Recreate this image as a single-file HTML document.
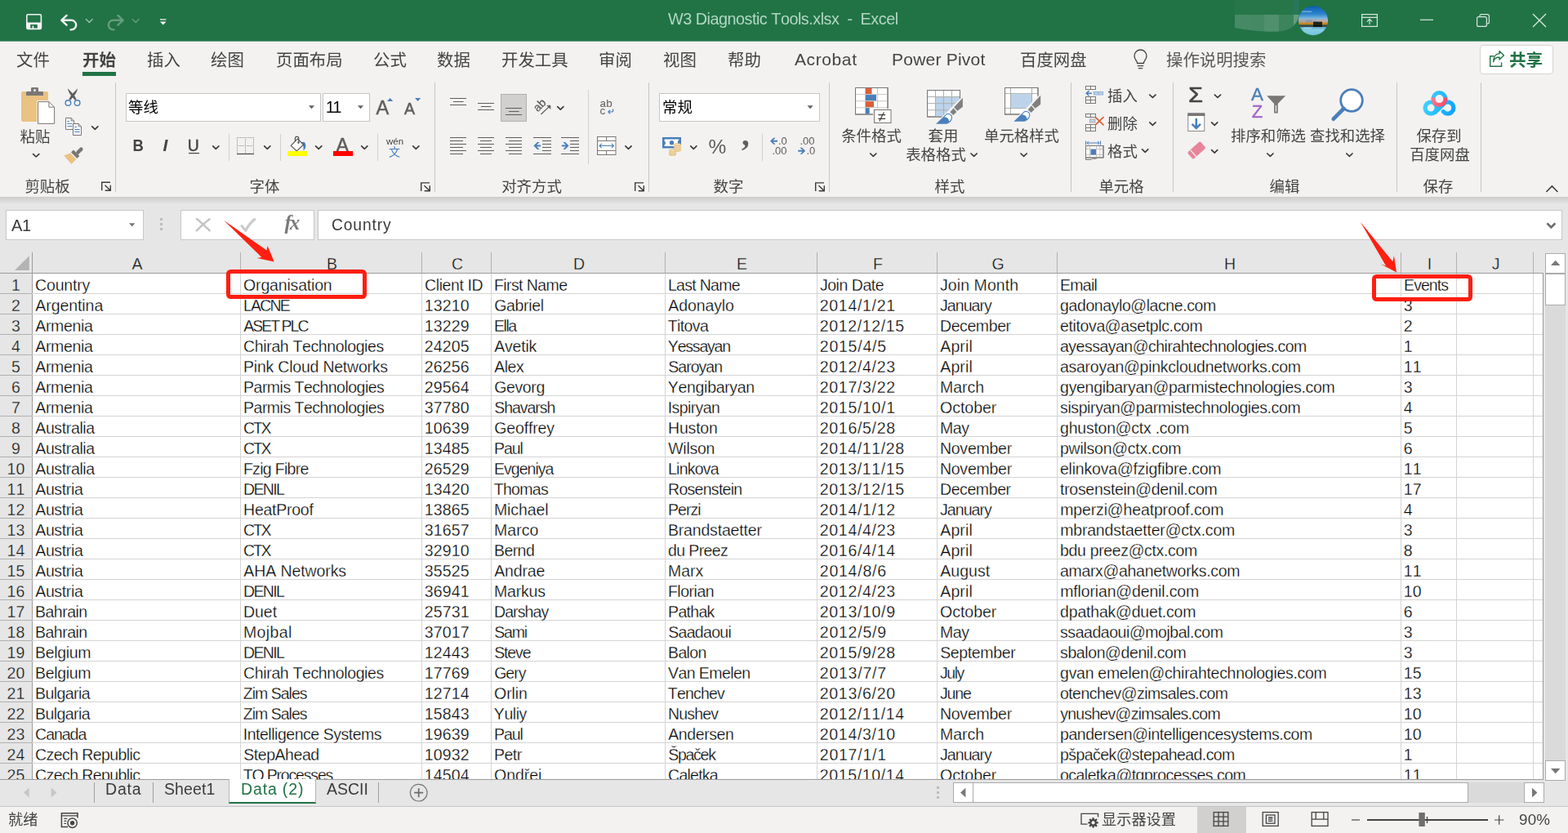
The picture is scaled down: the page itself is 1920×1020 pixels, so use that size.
<!DOCTYPE html><html lang="zh-CN"><head><meta charset="utf-8"><title>W3 Diagnostic Tools.xlsx - Excel</title><style>
*{box-sizing:border-box;margin:0;padding:0}
html,body{width:1920px;height:1020px;overflow:hidden;background:#e6e6e6}
body{font-family:"Liberation Sans","Noto Sans CJK SC",sans-serif;position:relative;color:#444}
.a{position:absolute}
.t{position:absolute;white-space:nowrap;line-height:1;will-change:transform}
#title{left:0;top:0;width:1920px;height:51px;background:#217346;border-bottom:1px solid #6fa387}
#tabs{left:0;top:51px;width:1920px;height:45px;background:#f3f2f1}
#ribbon{left:0;top:96px;width:1920px;height:145px;background:#f3f2f1}
#shade{left:0;top:241px;width:1920px;height:9px;background:linear-gradient(#cdcccb,#e6e6e6)}
.tab{font-size:20.4px;top:64.3px;color:#444}
.gl{font-size:18.4px;top:220px;color:#444}
.rt{font-size:18.4px;color:#444;margin-top:0.3px}
.sep{position:absolute;width:1px;background:#c8c6c4}
.box{position:absolute;background:#fff;border:1px solid #c6c6c6}
.cell{position:absolute;white-space:nowrap;font-size:19.5px;line-height:25px;height:25px;color:#000;font-kerning:none;-webkit-text-stroke:0.3px #fff}
.hl{position:absolute;height:1px;background:#d4d4d4}
.vl{position:absolute;width:1px;background:#d4d4d4}
.ch{position:absolute;top:310px;height:25px;margin-left:1px;font-size:19.5px;line-height:27px;text-align:center;color:#111;-webkit-text-stroke:0.3px #e6e6e6}
.rh{position:absolute;left:0;width:39px;height:25px;font-size:19.5px;line-height:25px;text-align:center;color:#111;font-kerning:none;-webkit-text-stroke:0.3px #e6e6e6}
svg{position:absolute;overflow:visible;will-change:transform}
</style></head><body>
<div id="title" class="a">
<div class="t" style="left:818.20px;top:14.24px;font-size:19.8px;letter-spacing:-0.48px;color:#b2d7c2;font-family:'Liberation Sans',sans-serif;font-kerning:none;white-space:pre;">W3 Diagnostic Tools.xlsx  -  Excel</div>
</div>
<div id="tabs" class="a"></div>
<div class="t tab" style="left:19.7px;">文件</div>
<div class="t tab" style="left:100.7px;font-weight:bold;">开始</div>
<div class="t tab" style="left:179.7px;">插入</div>
<div class="t tab" style="left:257.7px;">绘图</div>
<div class="t tab" style="left:337.7px;">页面布局</div>
<div class="t tab" style="left:456.7px;">公式</div>
<div class="t tab" style="left:534.7px;">数据</div>
<div class="t tab" style="left:613.7px;">开发工具</div>
<div class="t tab" style="left:732.7px;">审阅</div>
<div class="t tab" style="left:811.7px;">视图</div>
<div class="t tab" style="left:890.7px;">帮助</div>
<div class="t" style="left:972.50px;top:62.22px;font-size:21px;letter-spacing:0.6px;color:#444;font-family:'Liberation Sans',sans-serif;font-kerning:none;white-space:pre;">Acrobat</div>
<div class="t" style="left:1091.72px;top:62.22px;font-size:21px;letter-spacing:0.22px;color:#444;font-family:'Liberation Sans',sans-serif;font-kerning:none;white-space:pre;">Power Pivot</div>
<div class="t tab" style="left:1248.7px;">百度网盘</div>
<div class="t tab" style="left:1427.7px;color:#5a5856;">操作说明搜索</div>
<div class="a" style="left:101px;top:88px;width:41px;height:5px;background:#217346"></div>
<div class="a" style="left:1812px;top:55px;width:90px;height:36px;background:#fff;border:1px solid #d6d4d2;border-radius:4px"></div>
<div class="t" style="left:1847.700px;top:64.200px;font-size:20.600px;font-weight:bold;color:#217346">共享</div>
<div id="ribbon" class="a"></div><div id="shade" class="a"></div>
<div class="sep" style="left:141px;top:101px;height:134px"></div>
<div class="sep" style="left:532px;top:101px;height:134px"></div>
<div class="sep" style="left:794px;top:101px;height:134px"></div>
<div class="sep" style="left:1015px;top:101px;height:134px"></div>
<div class="sep" style="left:1311px;top:101px;height:134px"></div>
<div class="sep" style="left:1436px;top:101px;height:134px"></div>
<div class="sep" style="left:1710px;top:101px;height:134px"></div>
<div class="sep" style="left:1813px;top:101px;height:134px"></div>
<div class="sep" style="left:280px;top:164px;height:33px;background:#d2d0ce"></div>
<div class="sep" style="left:343px;top:164px;height:33px;background:#d2d0ce"></div>
<div class="sep" style="left:462px;top:164px;height:33px;background:#d2d0ce"></div>
<div class="sep" style="left:933px;top:164px;height:33px;background:#d2d0ce"></div>
<div class="sep" style="left:720px;top:110px;height:91px;background:#d2d0ce"></div>
<div class="t gl" style="left:-42px;width:200px;text-align:center">剪贴板</div>
<div class="t gl" style="left:224px;width:200px;text-align:center">字体</div>
<div class="t gl" style="left:551px;width:200px;text-align:center">对齐方式</div>
<div class="t gl" style="left:792px;width:200px;text-align:center">数字</div>
<div class="t gl" style="left:1063px;width:200px;text-align:center">样式</div>
<div class="t gl" style="left:1273px;width:200px;text-align:center">单元格</div>
<div class="t gl" style="left:1473px;width:200px;text-align:center">编辑</div>
<div class="t gl" style="left:1661px;width:200px;text-align:center">保存</div>
<div class="t rt" style="left:-57px;top:159px;width:200px;text-align:center">粘贴</div>
<div class="t rt" style="left:967px;top:158px;width:200px;text-align:center">条件格式</div>
<div class="t rt" style="left:1054.5px;top:158px;width:200px;text-align:center">套用</div>
<div class="t rt" style="left:1046px;top:181px;width:200px;text-align:center">表格格式</div>
<div class="t rt" style="left:1151px;top:158px;width:200px;text-align:center">单元格样式</div>
<div class="t rt" style="left:1453px;top:158px;width:200px;text-align:center">排序和筛选</div>
<div class="t rt" style="left:1550px;top:158px;width:200px;text-align:center">查找和选择</div>
<div class="t rt" style="left:1661.5px;top:158px;width:200px;text-align:center">保存到</div>
<div class="t rt" style="left:1662.5px;top:181px;width:200px;text-align:center">百度网盘</div>
<div class="t rt" style="left:1356px;top:108.3px">插入</div>
<div class="t rt" style="left:1356px;top:142.3px">删除</div>
<div class="t rt" style="left:1356px;top:176.3px">格式</div>
<div class="box" style="left:154px;top:114px;width:239px;height:35px"></div>
<div class="box" style="left:395px;top:114px;width:58px;height:35px"></div>
<div class="box" style="left:807px;top:114px;width:197px;height:35px"></div>
<div class="t" style="left:156.800px;top:122.600px;font-size:18.400px;color:#000">等线</div>
<div class="t" style="left:398.74px;top:122.09px;font-size:19.5px;letter-spacing:-2.33px;color:#000;font-family:'Liberation Sans',sans-serif;font-kerning:none;white-space:pre;">11</div>
<div class="t" style="left:810.800px;top:122.600px;font-size:18.400px;color:#000">常规</div>
<div class="a" style="left:613px;top:115px;width:32px;height:34px;background:#d2d0ce;border:1px solid #b3b0ad"></div>
<div class="box" style="left:7px;top:257px;width:169px;height:37px"></div>
<div class="box" style="left:221px;top:257px;width:164px;height:37px"></div>
<div class="box" style="left:389px;top:257px;width:1524px;height:37px"></div>
<div class="t" style="left:14.10px;top:265.87px;font-size:20px;letter-spacing:-0.44px;color:#3b3b3b;font-family:'Liberation Sans',sans-serif;font-kerning:none;white-space:pre;">A1</div>
<div class="t" style="left:405.64px;top:265.66px;font-size:19.3px;letter-spacing:0.86px;color:#3b3b3b;font-family:'Liberation Sans',sans-serif;font-kerning:none;white-space:pre;">Country</div>
<div class="a" style="left:0;top:309px;width:1890px;height:26px;background:#e6e6e6"></div>
<div class="a" style="left:0;top:335px;width:39px;height:620px;background:#e6e6e6"></div>
<div class="a" style="left:40px;top:335px;width:1849px;height:620px;background:#fff"></div>
<div class="a" style="left:0;top:334px;width:1890px;height:1px;background:#9b9b9b"></div>
<div class="a" style="left:39px;top:309px;width:1px;height:646px;background:#9b9b9b"></div>
<div class="a" style="left:1889px;top:334px;width:1px;height:621px;background:#9b9b9b"></div>
<div class="ch" style="left:40px;width:254px">A</div>
<div class="vl" style="left:294px;top:309px;height:25px;background:#b1b1b1"></div>
<div class="vl" style="left:294px;top:335px;height:620px"></div>
<div class="ch" style="left:295px;width:221px">B</div>
<div class="vl" style="left:516px;top:309px;height:25px;background:#b1b1b1"></div>
<div class="vl" style="left:516px;top:335px;height:620px"></div>
<div class="ch" style="left:517px;width:84px">C</div>
<div class="vl" style="left:601px;top:309px;height:25px;background:#b1b1b1"></div>
<div class="vl" style="left:601px;top:335px;height:620px"></div>
<div class="ch" style="left:602px;width:212px">D</div>
<div class="vl" style="left:814px;top:309px;height:25px;background:#b1b1b1"></div>
<div class="vl" style="left:814px;top:335px;height:620px"></div>
<div class="ch" style="left:815px;width:185px">E</div>
<div class="vl" style="left:1000px;top:309px;height:25px;background:#b1b1b1"></div>
<div class="vl" style="left:1000px;top:335px;height:620px"></div>
<div class="ch" style="left:1001px;width:146px">F</div>
<div class="vl" style="left:1147px;top:309px;height:25px;background:#b1b1b1"></div>
<div class="vl" style="left:1147px;top:335px;height:620px"></div>
<div class="ch" style="left:1148px;width:146px">G</div>
<div class="vl" style="left:1294px;top:309px;height:25px;background:#b1b1b1"></div>
<div class="vl" style="left:1294px;top:335px;height:620px"></div>
<div class="ch" style="left:1295px;width:420px">H</div>
<div class="vl" style="left:1715px;top:309px;height:25px;background:#b1b1b1"></div>
<div class="vl" style="left:1715px;top:335px;height:620px"></div>
<div class="ch" style="left:1716px;width:67px">I</div>
<div class="vl" style="left:1783px;top:309px;height:25px;background:#b1b1b1"></div>
<div class="vl" style="left:1783px;top:335px;height:620px"></div>
<div class="ch" style="left:1784px;width:93px">J</div>
<div class="vl" style="left:1877px;top:309px;height:25px;background:#b1b1b1"></div>
<div class="vl" style="left:1877px;top:335px;height:620px"></div>
<div class="a" style="left:0;top:335px;width:1890px;height:620px;overflow:hidden">
<div class="hl" style="left:0;top:24px;width:1889px"></div>
<div class="hl" style="left:0;top:24px;width:39px;background:#b1b1b1"></div>
<div class="rh" style="top:2px;letter-spacing:0.16px">1</div>
<div class="cell" style="left:43.11px;top:2px;letter-spacing:-0.19px">Country</div>
<div class="cell" style="left:298.12px;top:2px;letter-spacing:-0.18px">Organisation</div>
<div class="cell" style="left:520.11px;top:2px;letter-spacing:-0.42px">Client ID</div>
<div class="cell" style="left:604.90px;top:2px;letter-spacing:-0.58px">First Name</div>
<div class="cell" style="left:817.99px;top:2px;letter-spacing:-0.71px">Last Name</div>
<div class="cell" style="left:1003.97px;top:2px;letter-spacing:-0.47px">Join Date</div>
<div class="cell" style="left:1150.97px;top:2px;letter-spacing:0.08px">Join Month</div>
<div class="cell" style="left:1298.08px;top:2px;letter-spacing:-0.73px">Email</div>
<div class="cell" style="left:1719.08px;top:2px;letter-spacing:-0.94px">Events</div>
<div class="hl" style="left:0;top:49px;width:1889px"></div>
<div class="hl" style="left:0;top:49px;width:39px;background:#b1b1b1"></div>
<div class="rh" style="top:27px;letter-spacing:0.16px">2</div>
<div class="cell" style="left:43.26px;top:27px;letter-spacing:-0.06px">Argentina</div>
<div class="cell" style="left:297.99px;top:27px;letter-spacing:-1.79px">LACNE</div>
<div class="cell" style="left:519.80px;top:27px;letter-spacing:0.15px">13210</div>
<div class="cell" style="left:605.21px;top:27px;letter-spacing:-0.32px">Gabriel</div>
<div class="cell" style="left:818.26px;top:27px;letter-spacing:-0.1px">Adonaylo</div>
<div class="cell" style="left:1003.80px;top:27px;letter-spacing:0.69px">2014/1/21</div>
<div class="cell" style="left:1150.97px;top:27px;letter-spacing:-0.92px">January</div>
<div class="cell" style="left:1298.12px;top:27px;letter-spacing:-0.42px">gadonaylo@lacne.com</div>
<div class="cell" style="left:1718.80px;top:27px;letter-spacing:0.15px">3</div>
<div class="hl" style="left:0;top:74px;width:1889px"></div>
<div class="hl" style="left:0;top:74px;width:39px;background:#b1b1b1"></div>
<div class="rh" style="top:52px;letter-spacing:0.16px">3</div>
<div class="cell" style="left:43.26px;top:52px;letter-spacing:-0.32px">Armenia</div>
<div class="cell" style="left:298.26px;top:52px;letter-spacing:-2px">ASET PLC</div>
<div class="cell" style="left:519.80px;top:52px;letter-spacing:0.15px">13229</div>
<div class="cell" style="left:605.08px;top:52px;letter-spacing:-1.51px">Ella</div>
<div class="cell" style="left:817.78px;top:52px;letter-spacing:-0.62px">Titova</div>
<div class="cell" style="left:1003.80px;top:52px;letter-spacing:0.64px">2012/12/15</div>
<div class="cell" style="left:1150.99px;top:52px;letter-spacing:-0.41px">December</div>
<div class="cell" style="left:1297.94px;top:52px;letter-spacing:-0.36px">etitova@asetplc.com</div>
<div class="cell" style="left:1718.80px;top:52px;letter-spacing:0.15px">2</div>
<div class="hl" style="left:0;top:99px;width:1889px"></div>
<div class="hl" style="left:0;top:99px;width:39px;background:#b1b1b1"></div>
<div class="rh" style="top:77px;letter-spacing:0.16px">4</div>
<div class="cell" style="left:43.26px;top:77px;letter-spacing:-0.32px">Armenia</div>
<div class="cell" style="left:298.11px;top:77px;letter-spacing:-0.37px">Chirah Technologies</div>
<div class="cell" style="left:519.80px;top:77px;letter-spacing:0.15px">24205</div>
<div class="cell" style="left:605.26px;top:77px;letter-spacing:-0.22px">Avetik</div>
<div class="cell" style="left:817.86px;top:77px;letter-spacing:-1.2px">Yessayan</div>
<div class="cell" style="left:1003.80px;top:77px;letter-spacing:0.76px">2015/4/5</div>
<div class="cell" style="left:1151.26px;top:77px;letter-spacing:0.13px">April</div>
<div class="cell" style="left:1297.94px;top:77px;letter-spacing:-0.5px">ayessayan@chirahtechnologies.com</div>
<div class="cell" style="left:1718.80px;top:77px;letter-spacing:0.15px">1</div>
<div class="hl" style="left:0;top:124px;width:1889px"></div>
<div class="hl" style="left:0;top:124px;width:39px;background:#b1b1b1"></div>
<div class="rh" style="top:102px;letter-spacing:0.16px">5</div>
<div class="cell" style="left:43.26px;top:102px;letter-spacing:-0.32px">Armenia</div>
<div class="cell" style="left:298.08px;top:102px;letter-spacing:-0.22px">Pink Cloud Networks</div>
<div class="cell" style="left:519.80px;top:102px;letter-spacing:0.15px">26256</div>
<div class="cell" style="left:605.26px;top:102px;letter-spacing:-0.5px">Alex</div>
<div class="cell" style="left:818.21px;top:102px;letter-spacing:-0.96px">Saroyan</div>
<div class="cell" style="left:1003.80px;top:102px;letter-spacing:0.69px">2012/4/23</div>
<div class="cell" style="left:1151.26px;top:102px;letter-spacing:0.13px">April</div>
<div class="cell" style="left:1297.94px;top:102px;letter-spacing:-0.26px">asaroyan@pinkcloudnetworks.com</div>
<div class="cell" style="left:1718.80px;top:102px;letter-spacing:0.15px">11</div>
<div class="hl" style="left:0;top:149px;width:1889px"></div>
<div class="hl" style="left:0;top:149px;width:39px;background:#b1b1b1"></div>
<div class="rh" style="top:127px;letter-spacing:0.16px">6</div>
<div class="cell" style="left:43.26px;top:127px;letter-spacing:-0.32px">Armenia</div>
<div class="cell" style="left:298.08px;top:127px;letter-spacing:-0.52px">Parmis Technologies</div>
<div class="cell" style="left:519.80px;top:127px;letter-spacing:0.15px">29564</div>
<div class="cell" style="left:605.21px;top:127px;letter-spacing:-0.38px">Gevorg</div>
<div class="cell" style="left:817.86px;top:127px;letter-spacing:-0.32px">Yengibaryan</div>
<div class="cell" style="left:1003.80px;top:127px;letter-spacing:0.69px">2017/3/22</div>
<div class="cell" style="left:1150.99px;top:127px;letter-spacing:-0.02px">March</div>
<div class="cell" style="left:1298.12px;top:127px;letter-spacing:-0.31px">gyengibaryan@parmistechnologies.com</div>
<div class="cell" style="left:1718.80px;top:127px;letter-spacing:0.15px">3</div>
<div class="hl" style="left:0;top:174px;width:1889px"></div>
<div class="hl" style="left:0;top:174px;width:39px;background:#b1b1b1"></div>
<div class="rh" style="top:152px;letter-spacing:0.16px">7</div>
<div class="cell" style="left:43.26px;top:152px;letter-spacing:-0.32px">Armenia</div>
<div class="cell" style="left:298.08px;top:152px;letter-spacing:-0.52px">Parmis Technologies</div>
<div class="cell" style="left:519.80px;top:152px;letter-spacing:0.15px">37780</div>
<div class="cell" style="left:605.21px;top:152px;letter-spacing:-1.05px">Shavarsh</div>
<div class="cell" style="left:817.70px;top:152px;letter-spacing:-0.6px">Ispiryan</div>
<div class="cell" style="left:1003.80px;top:152px;letter-spacing:0.69px">2015/10/1</div>
<div class="cell" style="left:1151.12px;top:152px;letter-spacing:-0.04px">October</div>
<div class="cell" style="left:1298.04px;top:152px;letter-spacing:-0.4px">sispiryan@parmistechnologies.com</div>
<div class="cell" style="left:1718.80px;top:152px;letter-spacing:0.15px">4</div>
<div class="hl" style="left:0;top:199px;width:1889px"></div>
<div class="hl" style="left:0;top:199px;width:39px;background:#b1b1b1"></div>
<div class="rh" style="top:177px;letter-spacing:0.16px">8</div>
<div class="cell" style="left:43.26px;top:177px;letter-spacing:-0.37px">Australia</div>
<div class="cell" style="left:298.11px;top:177px;letter-spacing:-2.31px">CTX</div>
<div class="cell" style="left:519.80px;top:177px;letter-spacing:0.15px">10639</div>
<div class="cell" style="left:605.21px;top:177px;letter-spacing:-0.14px">Geoffrey</div>
<div class="cell" style="left:818.08px;top:177px;letter-spacing:-0.21px">Huston</div>
<div class="cell" style="left:1003.80px;top:177px;letter-spacing:0.69px">2016/5/28</div>
<div class="cell" style="left:1150.99px;top:177px;letter-spacing:-0.45px">May</div>
<div class="cell" style="left:1298.12px;top:177px;letter-spacing:-0.25px">ghuston@ctx .com</div>
<div class="cell" style="left:1718.80px;top:177px;letter-spacing:0.15px">5</div>
<div class="hl" style="left:0;top:224px;width:1889px"></div>
<div class="hl" style="left:0;top:224px;width:39px;background:#b1b1b1"></div>
<div class="rh" style="top:202px;letter-spacing:0.16px">9</div>
<div class="cell" style="left:43.26px;top:202px;letter-spacing:-0.37px">Australia</div>
<div class="cell" style="left:298.11px;top:202px;letter-spacing:-2.31px">CTX</div>
<div class="cell" style="left:519.80px;top:202px;letter-spacing:0.15px">13485</div>
<div class="cell" style="left:605.08px;top:202px;letter-spacing:-1.06px">Paul</div>
<div class="cell" style="left:818.16px;top:202px;letter-spacing:-0.24px">Wilson</div>
<div class="cell" style="left:1003.80px;top:202px;letter-spacing:0.64px">2014/11/28</div>
<div class="cell" style="left:1150.90px;top:202px;letter-spacing:-0.23px">November</div>
<div class="cell" style="left:1298.00px;top:202px;letter-spacing:-0.25px">pwilson@ctx.com</div>
<div class="cell" style="left:1718.80px;top:202px;letter-spacing:0.15px">6</div>
<div class="hl" style="left:0;top:249px;width:1889px"></div>
<div class="hl" style="left:0;top:249px;width:39px;background:#b1b1b1"></div>
<div class="rh" style="top:227px;letter-spacing:0.16px">10</div>
<div class="cell" style="left:43.26px;top:227px;letter-spacing:-0.37px">Australia</div>
<div class="cell" style="left:297.90px;top:227px;letter-spacing:-0.69px">Fzig Fibre</div>
<div class="cell" style="left:519.80px;top:227px;letter-spacing:0.15px">26529</div>
<div class="cell" style="left:605.08px;top:227px;letter-spacing:-0.99px">Evgeniya</div>
<div class="cell" style="left:817.99px;top:227px;letter-spacing:-0.75px">Linkova</div>
<div class="cell" style="left:1003.80px;top:227px;letter-spacing:0.64px">2013/11/15</div>
<div class="cell" style="left:1150.90px;top:227px;letter-spacing:-0.23px">November</div>
<div class="cell" style="left:1297.94px;top:227px;letter-spacing:-0.2px">elinkova@fzigfibre.com</div>
<div class="cell" style="left:1718.80px;top:227px;letter-spacing:0.15px">11</div>
<div class="hl" style="left:0;top:274px;width:1889px"></div>
<div class="hl" style="left:0;top:274px;width:39px;background:#b1b1b1"></div>
<div class="rh" style="top:252px;letter-spacing:0.16px">11</div>
<div class="cell" style="left:43.26px;top:252px;letter-spacing:-0.37px">Austria</div>
<div class="cell" style="left:297.99px;top:252px;letter-spacing:-1.64px">DENIL</div>
<div class="cell" style="left:519.80px;top:252px;letter-spacing:0.15px">13420</div>
<div class="cell" style="left:604.78px;top:252px;letter-spacing:-0.7px">Thomas</div>
<div class="cell" style="left:818.08px;top:252px;letter-spacing:-0.72px">Rosenstein</div>
<div class="cell" style="left:1003.80px;top:252px;letter-spacing:0.64px">2013/12/15</div>
<div class="cell" style="left:1150.99px;top:252px;letter-spacing:-0.41px">December</div>
<div class="cell" style="left:1298.06px;top:252px;letter-spacing:-0.3px">trosenstein@denil.com</div>
<div class="cell" style="left:1718.80px;top:252px;letter-spacing:0.15px">17</div>
<div class="hl" style="left:0;top:299px;width:1889px"></div>
<div class="hl" style="left:0;top:299px;width:39px;background:#b1b1b1"></div>
<div class="rh" style="top:277px;letter-spacing:0.16px">12</div>
<div class="cell" style="left:43.26px;top:277px;letter-spacing:-0.37px">Austria</div>
<div class="cell" style="left:298.08px;top:277px;letter-spacing:-0.26px">HeatProof</div>
<div class="cell" style="left:519.80px;top:277px;letter-spacing:0.15px">13865</div>
<div class="cell" style="left:604.99px;top:277px;letter-spacing:-0.11px">Michael</div>
<div class="cell" style="left:818.08px;top:277px;letter-spacing:-0.99px">Perzi</div>
<div class="cell" style="left:1003.80px;top:277px;letter-spacing:0.69px">2014/1/12</div>
<div class="cell" style="left:1150.97px;top:277px;letter-spacing:-0.92px">January</div>
<div class="cell" style="left:1298.19px;top:277px;letter-spacing:-0.14px">mperzi@heatproof.com</div>
<div class="cell" style="left:1718.80px;top:277px;letter-spacing:0.15px">4</div>
<div class="hl" style="left:0;top:324px;width:1889px"></div>
<div class="hl" style="left:0;top:324px;width:39px;background:#b1b1b1"></div>
<div class="rh" style="top:302px;letter-spacing:0.16px">13</div>
<div class="cell" style="left:43.26px;top:302px;letter-spacing:-0.37px">Austria</div>
<div class="cell" style="left:298.11px;top:302px;letter-spacing:-2.31px">CTX</div>
<div class="cell" style="left:519.80px;top:302px;letter-spacing:0.15px">31657</div>
<div class="cell" style="left:604.99px;top:302px;letter-spacing:0.07px">Marco</div>
<div class="cell" style="left:817.99px;top:302px;letter-spacing:-0.18px">Brandstaetter</div>
<div class="cell" style="left:1003.80px;top:302px;letter-spacing:0.69px">2014/4/23</div>
<div class="cell" style="left:1151.26px;top:302px;letter-spacing:0.13px">April</div>
<div class="cell" style="left:1298.19px;top:302px;letter-spacing:-0.19px">mbrandstaetter@ctx.com</div>
<div class="cell" style="left:1718.80px;top:302px;letter-spacing:0.15px">3</div>
<div class="hl" style="left:0;top:349px;width:1889px"></div>
<div class="hl" style="left:0;top:349px;width:39px;background:#b1b1b1"></div>
<div class="rh" style="top:327px;letter-spacing:0.16px">14</div>
<div class="cell" style="left:43.26px;top:327px;letter-spacing:-0.37px">Austria</div>
<div class="cell" style="left:298.11px;top:327px;letter-spacing:-2.31px">CTX</div>
<div class="cell" style="left:519.80px;top:327px;letter-spacing:0.15px">32910</div>
<div class="cell" style="left:604.99px;top:327px;letter-spacing:-0.57px">Bernd</div>
<div class="cell" style="left:818.12px;top:327px;letter-spacing:-0.62px">du Preez</div>
<div class="cell" style="left:1003.80px;top:327px;letter-spacing:0.69px">2016/4/14</div>
<div class="cell" style="left:1151.26px;top:327px;letter-spacing:0.13px">April</div>
<div class="cell" style="left:1298.10px;top:327px;letter-spacing:-0.35px">bdu preez@ctx.com</div>
<div class="cell" style="left:1718.80px;top:327px;letter-spacing:0.15px">8</div>
<div class="hl" style="left:0;top:374px;width:1889px"></div>
<div class="hl" style="left:0;top:374px;width:39px;background:#b1b1b1"></div>
<div class="rh" style="top:352px;letter-spacing:0.16px">15</div>
<div class="cell" style="left:43.26px;top:352px;letter-spacing:-0.37px">Austria</div>
<div class="cell" style="left:298.26px;top:352px;letter-spacing:-0.09px">AHA Networks</div>
<div class="cell" style="left:519.80px;top:352px;letter-spacing:0.15px">35525</div>
<div class="cell" style="left:605.26px;top:352px;letter-spacing:-0.17px">Andrae</div>
<div class="cell" style="left:817.99px;top:352px;letter-spacing:0.01px">Marx</div>
<div class="cell" style="left:1003.80px;top:352px;letter-spacing:0.76px">2014/8/6</div>
<div class="cell" style="left:1151.26px;top:352px;letter-spacing:0.05px">August</div>
<div class="cell" style="left:1297.94px;top:352px;letter-spacing:-0.31px">amarx@ahanetworks.com</div>
<div class="cell" style="left:1718.80px;top:352px;letter-spacing:0.15px">11</div>
<div class="hl" style="left:0;top:399px;width:1889px"></div>
<div class="hl" style="left:0;top:399px;width:39px;background:#b1b1b1"></div>
<div class="rh" style="top:377px;letter-spacing:0.16px">16</div>
<div class="cell" style="left:43.26px;top:377px;letter-spacing:-0.37px">Austria</div>
<div class="cell" style="left:297.99px;top:377px;letter-spacing:-1.64px">DENIL</div>
<div class="cell" style="left:519.80px;top:377px;letter-spacing:0.15px">36941</div>
<div class="cell" style="left:604.99px;top:377px;letter-spacing:-0.2px">Markus</div>
<div class="cell" style="left:817.90px;top:377px;letter-spacing:-0.47px">Florian</div>
<div class="cell" style="left:1003.80px;top:377px;letter-spacing:0.69px">2012/4/23</div>
<div class="cell" style="left:1151.26px;top:377px;letter-spacing:0.13px">April</div>
<div class="cell" style="left:1298.19px;top:377px;letter-spacing:-0.15px">mflorian@denil.com</div>
<div class="cell" style="left:1718.80px;top:377px;letter-spacing:0.15px">10</div>
<div class="hl" style="left:0;top:424px;width:1889px"></div>
<div class="hl" style="left:0;top:424px;width:39px;background:#b1b1b1"></div>
<div class="rh" style="top:402px;letter-spacing:0.16px">17</div>
<div class="cell" style="left:42.99px;top:402px;letter-spacing:-0.51px">Bahrain</div>
<div class="cell" style="left:297.99px;top:402px;letter-spacing:-0.02px">Duet</div>
<div class="cell" style="left:519.80px;top:402px;letter-spacing:0.15px">25731</div>
<div class="cell" style="left:604.99px;top:402px;letter-spacing:-0.91px">Darshay</div>
<div class="cell" style="left:818.08px;top:402px;letter-spacing:-0.69px">Pathak</div>
<div class="cell" style="left:1003.80px;top:402px;letter-spacing:0.69px">2013/10/9</div>
<div class="cell" style="left:1151.12px;top:402px;letter-spacing:-0.04px">October</div>
<div class="cell" style="left:1298.12px;top:402px;letter-spacing:-0.2px">dpathak@duet.com</div>
<div class="cell" style="left:1718.80px;top:402px;letter-spacing:0.15px">6</div>
<div class="hl" style="left:0;top:449px;width:1889px"></div>
<div class="hl" style="left:0;top:449px;width:39px;background:#b1b1b1"></div>
<div class="rh" style="top:427px;letter-spacing:0.16px">18</div>
<div class="cell" style="left:42.99px;top:427px;letter-spacing:-0.51px">Bahrain</div>
<div class="cell" style="left:297.99px;top:427px;letter-spacing:0.36px">Mojbal</div>
<div class="cell" style="left:519.80px;top:427px;letter-spacing:0.15px">37017</div>
<div class="cell" style="left:605.21px;top:427px;letter-spacing:-1.18px">Sami</div>
<div class="cell" style="left:818.21px;top:427px;letter-spacing:-0.68px">Saadaoui</div>
<div class="cell" style="left:1003.80px;top:427px;letter-spacing:0.76px">2012/5/9</div>
<div class="cell" style="left:1150.99px;top:427px;letter-spacing:-0.45px">May</div>
<div class="cell" style="left:1298.04px;top:427px;letter-spacing:-0.45px">ssaadaoui@mojbal.com</div>
<div class="cell" style="left:1718.80px;top:427px;letter-spacing:0.15px">3</div>
<div class="hl" style="left:0;top:474px;width:1889px"></div>
<div class="hl" style="left:0;top:474px;width:39px;background:#b1b1b1"></div>
<div class="rh" style="top:452px;letter-spacing:0.16px">19</div>
<div class="cell" style="left:42.99px;top:452px;letter-spacing:-0.32px">Belgium</div>
<div class="cell" style="left:297.99px;top:452px;letter-spacing:-1.64px">DENIL</div>
<div class="cell" style="left:519.80px;top:452px;letter-spacing:0.15px">12443</div>
<div class="cell" style="left:605.21px;top:452px;letter-spacing:-1.13px">Steve</div>
<div class="cell" style="left:817.99px;top:452px;letter-spacing:-0.61px">Balon</div>
<div class="cell" style="left:1003.80px;top:452px;letter-spacing:0.69px">2015/9/28</div>
<div class="cell" style="left:1151.21px;top:452px;letter-spacing:-0.37px">September</div>
<div class="cell" style="left:1298.04px;top:452px;letter-spacing:-0.4px">sbalon@denil.com</div>
<div class="cell" style="left:1718.80px;top:452px;letter-spacing:0.15px">3</div>
<div class="hl" style="left:0;top:499px;width:1889px"></div>
<div class="hl" style="left:0;top:499px;width:39px;background:#b1b1b1"></div>
<div class="rh" style="top:477px;letter-spacing:0.16px">20</div>
<div class="cell" style="left:42.99px;top:477px;letter-spacing:-0.32px">Belgium</div>
<div class="cell" style="left:298.11px;top:477px;letter-spacing:-0.37px">Chirah Technologies</div>
<div class="cell" style="left:519.80px;top:477px;letter-spacing:0.15px">17769</div>
<div class="cell" style="left:605.21px;top:477px;letter-spacing:-1px">Gery</div>
<div class="cell" style="left:818.07px;top:477px;letter-spacing:-0.58px">Van Emelen</div>
<div class="cell" style="left:1003.80px;top:477px;letter-spacing:0.76px">2013/7/7</div>
<div class="cell" style="left:1150.97px;top:477px;letter-spacing:-1.43px">July</div>
<div class="cell" style="left:1298.12px;top:477px;letter-spacing:-0.29px">gvan emelen@chirahtechnologies.com</div>
<div class="cell" style="left:1718.80px;top:477px;letter-spacing:0.15px">15</div>
<div class="hl" style="left:0;top:524px;width:1889px"></div>
<div class="hl" style="left:0;top:524px;width:39px;background:#b1b1b1"></div>
<div class="rh" style="top:502px;letter-spacing:0.16px">21</div>
<div class="cell" style="left:42.99px;top:502px;letter-spacing:-0.56px">Bulgaria</div>
<div class="cell" style="left:297.77px;top:502px;letter-spacing:-0.99px">Zim Sales</div>
<div class="cell" style="left:519.80px;top:502px;letter-spacing:0.15px">12714</div>
<div class="cell" style="left:605.12px;top:502px;letter-spacing:-0.14px">Orlin</div>
<div class="cell" style="left:817.78px;top:502px;letter-spacing:-0.79px">Tenchev</div>
<div class="cell" style="left:1003.80px;top:502px;letter-spacing:0.69px">2013/6/20</div>
<div class="cell" style="left:1150.97px;top:502px;letter-spacing:-1.12px">June</div>
<div class="cell" style="left:1297.94px;top:502px;letter-spacing:-0.55px">otenchev@zimsales.com</div>
<div class="cell" style="left:1718.80px;top:502px;letter-spacing:0.15px">13</div>
<div class="hl" style="left:0;top:549px;width:1889px"></div>
<div class="hl" style="left:0;top:549px;width:39px;background:#b1b1b1"></div>
<div class="rh" style="top:527px;letter-spacing:0.16px">22</div>
<div class="cell" style="left:42.99px;top:527px;letter-spacing:-0.56px">Bulgaria</div>
<div class="cell" style="left:297.77px;top:527px;letter-spacing:-0.99px">Zim Sales</div>
<div class="cell" style="left:519.80px;top:527px;letter-spacing:0.15px">15843</div>
<div class="cell" style="left:604.86px;top:527px;letter-spacing:-0.44px">Yuliy</div>
<div class="cell" style="left:817.90px;top:527px;letter-spacing:-0.79px">Nushev</div>
<div class="cell" style="left:1003.80px;top:527px;letter-spacing:0.64px">2012/11/14</div>
<div class="cell" style="left:1150.90px;top:527px;letter-spacing:-0.23px">November</div>
<div class="cell" style="left:1298.16px;top:527px;letter-spacing:-0.74px">ynushev@zimsales.com</div>
<div class="cell" style="left:1718.80px;top:527px;letter-spacing:0.15px">10</div>
<div class="hl" style="left:0;top:574px;width:1889px"></div>
<div class="hl" style="left:0;top:574px;width:39px;background:#b1b1b1"></div>
<div class="rh" style="top:552px;letter-spacing:0.16px">23</div>
<div class="cell" style="left:43.11px;top:552px;letter-spacing:-1.03px">Canada</div>
<div class="cell" style="left:297.70px;top:552px;letter-spacing:-0.47px">Intelligence Systems</div>
<div class="cell" style="left:519.80px;top:552px;letter-spacing:0.15px">19639</div>
<div class="cell" style="left:605.08px;top:552px;letter-spacing:-1.06px">Paul</div>
<div class="cell" style="left:818.26px;top:552px;letter-spacing:-0.41px">Andersen</div>
<div class="cell" style="left:1003.80px;top:552px;letter-spacing:0.69px">2014/3/10</div>
<div class="cell" style="left:1150.99px;top:552px;letter-spacing:-0.02px">March</div>
<div class="cell" style="left:1298.00px;top:552px;letter-spacing:-0.44px">pandersen@intelligencesystems.com</div>
<div class="cell" style="left:1718.80px;top:552px;letter-spacing:0.15px">10</div>
<div class="hl" style="left:0;top:599px;width:1889px"></div>
<div class="hl" style="left:0;top:599px;width:39px;background:#b1b1b1"></div>
<div class="rh" style="top:577px;letter-spacing:0.16px">24</div>
<div class="cell" style="left:43.11px;top:577px;letter-spacing:-0.59px">Czech Republic</div>
<div class="cell" style="left:298.21px;top:577px;letter-spacing:-0.44px">StepAhead</div>
<div class="cell" style="left:519.80px;top:577px;letter-spacing:0.15px">10932</div>
<div class="cell" style="left:605.08px;top:577px;letter-spacing:-0.55px">Petr</div>
<div class="cell" style="left:818.21px;top:577px;letter-spacing:-1.26px">Špaček</div>
<div class="cell" style="left:1003.80px;top:577px;letter-spacing:0.76px">2017/1/1</div>
<div class="cell" style="left:1150.97px;top:577px;letter-spacing:-0.92px">January</div>
<div class="cell" style="left:1298.00px;top:577px;letter-spacing:-0.57px">pšpaček@stepahead.com</div>
<div class="cell" style="left:1718.80px;top:577px;letter-spacing:0.15px">1</div>
<div class="hl" style="left:0;top:624px;width:1889px"></div>
<div class="hl" style="left:0;top:624px;width:39px;background:#b1b1b1"></div>
<div class="rh" style="top:602px;letter-spacing:0.16px">25</div>
<div class="cell" style="left:43.11px;top:602px;letter-spacing:-0.59px">Czech Republic</div>
<div class="cell" style="left:297.78px;top:602px;letter-spacing:-1.18px">TQ Processes</div>
<div class="cell" style="left:519.80px;top:602px;letter-spacing:0.15px">14504</div>
<div class="cell" style="left:605.12px;top:602px;letter-spacing:-0.06px">Ondřej</div>
<div class="cell" style="left:818.11px;top:602px;letter-spacing:-0.76px">Caletka</div>
<div class="cell" style="left:1003.80px;top:602px;letter-spacing:0.64px">2015/10/14</div>
<div class="cell" style="left:1151.12px;top:602px;letter-spacing:-0.04px">October</div>
<div class="cell" style="left:1297.94px;top:602px;letter-spacing:-0.52px">ocaletka@tqprocesses.com</div>
<div class="cell" style="left:1718.80px;top:602px;letter-spacing:0.15px">11</div>
</div>
<div class="a" style="left:0;top:955px;width:1920px;height:33px;background:#e6e6e6;border-bottom:1px solid #c6c6c6"></div>
<div class="a" style="left:0;top:954px;width:1890px;height:1px;background:#9b9b9b"></div>
<div class="a" style="left:280px;top:954px;width:107px;height:30px;background:#fff;border-left:1px solid #b5b5b5;border-right:1px solid #b5b5b5;border-bottom:2px solid #217346"></div>
<div class="t" style="left:128.64px;top:957.29px;font-size:19.5px;letter-spacing:0.8px;color:#3b3b3b;font-family:'Liberation Sans',sans-serif;font-kerning:none;white-space:pre;">Data</div>
<div class="t" style="left:201.02px;top:957.29px;font-size:19.5px;letter-spacing:0.11px;color:#3b3b3b;font-family:'Liberation Sans',sans-serif;font-kerning:none;white-space:pre;">Sheet1</div>
<div class="t" style="left:294.84px;top:957.29px;font-size:19.5px;letter-spacing:0.85px;color:#217346;font-family:'Liberation Sans',sans-serif;font-kerning:none;white-space:pre;">Data (2)</div>
<div class="t" style="left:399.70px;top:957.29px;font-size:19.5px;letter-spacing:-0.03px;color:#3b3b3b;font-family:'Liberation Sans',sans-serif;font-kerning:none;white-space:pre;">ASCII</div>
<div class="a" style="left:1167px;top:958px;width:724px;height:25px;background:#dadada"></div>
<div class="box" style="left:1167px;top:958px;width:25px;height:25px;border-color:#ababab"></div>
<div class="box" style="left:1191px;top:958px;width:607px;height:25px;border-color:#ababab"></div>
<div class="box" style="left:1866px;top:958px;width:25px;height:25px;border-color:#ababab"></div>
<div class="a" style="left:1892px;top:335px;width:25px;height:597px;background:#dadada"></div>
<div class="box" style="left:1892px;top:310px;width:25px;height:25px;border-color:#ababab"></div>
<div class="box" style="left:1892px;top:335px;width:25px;height:39px;border-color:#ababab"></div>
<div class="box" style="left:1892px;top:931px;width:25px;height:25px;border-color:#ababab"></div>
<div class="a" style="left:0;top:988px;width:1920px;height:32px;background:#f3f2f1"></div>
<div class="a" style="left:1466px;top:988px;width:60px;height:32px;background:#d2d0ce"></div>
<div class="t" style="left:9.600px;top:995.400px;font-size:18.200px;color:#444">就绪</div>
<div class="t" style="left:1348.600px;top:994.500px;font-size:18.200px;color:#444">显示器设置</div>
<div class="t" style="left:1859.65px;top:994.59px;font-size:18.8px;letter-spacing:0.18px;color:#444;font-family:'Liberation Sans',sans-serif;font-kerning:none;white-space:pre;">90%</div>
<svg width="1920" height="1020" style="left:0;top:0">
<g fill="none" stroke="#f3f3f3" stroke-width="1.6"><rect x="32.8" y="17.8" width="17.6" height="17.6" rx="1.5"/></g>
<path d="M33 27.5 h17.2 v7.6 h-4.4 v-5 h-8.6 v5 h-4.2 z M39.6 31.5 h1.6 v3.6 h-1.6z" fill="#f3f3f3"/>
<path d="M81.6 18.9 L75.3 24.800 L81.6 30.7 M76 24.800 H87.4 A5.800 5.800 0 0 1 87.4 36.400 H86.6" fill="none" stroke="#f3f3f3" stroke-width="2.400" stroke-linecap="round" stroke-linejoin="round"/>
<path d="M105.4 23.6 l3.9 3.8 l3.9 -3.8" fill="none" stroke="#fff" stroke-width="1.4" stroke-linecap="round" stroke-linejoin="round" opacity="0.55"/>
<path d="M144.400 18.900 L150.700 24.800 L144.400 30.700 M150 24.800 H138.600 A5.800 5.800 0 0 0 138.600 36.400 H139.400" fill="none" stroke="#fff" stroke-width="2.400" stroke-linecap="round" stroke-linejoin="round" opacity="0.3"/>
<path d="M162.3 23.6 l3.9 3.8 l3.9 -3.8" fill="none" stroke="#fff" stroke-width="1.4" stroke-linecap="round" stroke-linejoin="round" opacity="0.3"/>
<path d="M196 23.2 h7.4 v1.3 h-7.4z M195.8 26.4 h7.8 l-3.9 4z" fill="#f3f3f3"/>
<defs><clipPath id="ub"><path d="M1512 0 H1591 V14 C1591 26 1584 38.6 1562 38.800 C1548 39 1536 38.600 1512 34 z"/></clipPath></defs>
<g clip-path="url(#ub)"><rect x="1512" y="0" width="80" height="18" fill="#fff" opacity="0.025"/><rect x="1584" y="0" width="8" height="18" fill="#2a7a7a" opacity="0.35"/><rect x="1512" y="18" width="18" height="22" fill="#fff" opacity="0.170"/><rect x="1530" y="18" width="18" height="22" fill="#fff" opacity="0.160"/><rect x="1548" y="18" width="18" height="22" fill="#fff" opacity="0.210"/><rect x="1566" y="18" width="18" height="22" fill="#fff" opacity="0.120"/><rect x="1584" y="18" width="8" height="22" fill="#fff" opacity="0.300"/></g>
<defs><clipPath id="av"><circle cx="1608" cy="25.2" r="18"/></clipPath><linearGradient id="sky" x1="0" y1="0" x2="0" y2="1"><stop offset="0" stop-color="#0657a6"/><stop offset="0.600" stop-color="#2f86cd"/><stop offset="1" stop-color="#9fcbe8"/></linearGradient><linearGradient id="wat" x1="0" y1="0" x2="0" y2="1"><stop offset="0" stop-color="#5fa9c8"/><stop offset="0.300" stop-color="#86cfe3"/><stop offset="1" stop-color="#6fc0da"/></linearGradient></defs>
<g clip-path="url(#av)"><rect x="1589" y="6" width="38" height="19" fill="url(#sky)"/><rect x="1594" y="13.600" width="12" height="1.200" fill="#9cc6ea" opacity="0.800"/><rect x="1589" y="23.600" width="38" height="4.400" fill="#a9a5a8"/><rect x="1599" y="24.400" width="8" height="3" fill="#8e97a5"/><rect x="1613" y="24" width="14" height="3.400" fill="#bcaaa8"/><rect x="1589" y="27.600" width="38" height="3" fill="#c9861f"/><rect x="1608" y="26.600" width="11" height="6.600" fill="#1b2414"/><rect x="1589" y="30.400" width="38" height="2.800" fill="#3d4b4a"/><rect x="1608" y="30.400" width="11" height="3.400" fill="#11170e"/><rect x="1589" y="33" width="38" height="12" fill="url(#wat)"/><rect x="1596" y="33.800" width="10" height="1.400" fill="#b5e0ee" opacity="0.800"/></g>
<g fill="none" stroke="#d9e8df" stroke-width="1.2"><rect x="1667.6" y="17.6" width="18.8" height="14.8"/><path d="M1667.6 21.4 h18.8 M1677 30 v-6.2 M1673.8 26.6 l3.2 -3.2 l3.2 3.2"/></g>
<path d="M1739 24.3 h16" stroke="#d9e8df" stroke-width="1.2"/>
<g fill="none" stroke="#d9e8df" stroke-width="1.2"><rect x="1808.6" y="20.6" width="11.8" height="11.8" rx="2"/><path d="M1812 20.4 V19.6 a2 2 0 0 1 2 -2 H1821.4 a2 2 0 0 1 2 2 V27 a2 2 0 0 1 -2 2 H1820.6"/></g>
<path d="M1877 17 l16 16 M1893 17 l-16 16" stroke="#d9e8df" stroke-width="1.3"/>
<g fill="none" stroke="#444" stroke-width="1.3"><path d="M1392.6 77.5 c0 -3 -3.6 -4.6 -3.6 -9 a7.5 7.5 0 0 1 15 0 c0 4.4 -3.6 6 -3.6 9 z"/><path d="M1392.8 80.6 h7.4 M1393.8 83.6 h5.4"/></g>
<g fill="none" stroke="#217346" stroke-width="1.4" stroke-linejoin="round"><path d="M1829.5 68.8 H1824.7 V81.3 H1838.6 V76.6"/><path d="M1836 62.6 L1841.4 67.8 L1836 73 V70 C1832 70 1829.6 71.6 1828.6 75.6 C1828.6 69.6 1831.6 65.8 1836 65.6 z"/></g>
<rect x="26" y="112" width="33" height="37" rx="2.2" fill="#eac282"/>
<path d="M38 112 v-3.6 a1.4 1.4 0 0 1 1.4 -1.4 h6.2 a1.4 1.4 0 0 1 1.4 1.4 v3.6 h4.6 a1.4 1.4 0 0 1 1.4 1.4 v3.6 h-21 v-3.6 a1.4 1.4 0 0 1 1.4 -1.4 z" fill="#797775"/>
<circle cx="42.5" cy="110.4" r="1.5" fill="#f3f2f1"/>
<path d="M45 123 h15.6 l7.6 7.4 v22.4 h-23.2z" fill="#f3f2f1"/>
<path d="M46.5 124.6 h13.4 l6.7 6.6 v20.2 h-20.1z" fill="#fff" stroke="#797775" stroke-width="1"/>
<path d="M59.9 124.6 v6.6 h6.7" fill="none" stroke="#797775" stroke-width="1"/>
<path d="M40.6 188.6 l3.6 3.4 l3.6 -3.4" fill="none" stroke="#3b3a39" stroke-width="1.7" stroke-linecap="round" stroke-linejoin="round" opacity="1"/>
<path d="M83 108.200 L90.800 116.600 L93.600 121.400 L91.800 122.800 L87.400 117.400 C85 114.600 83.400 111.600 83 108.200z" fill="#605e5c"/>
<path d="M95 108.200 L87.200 116.600 L84.400 121.400 L86.200 122.800 L90.600 117.400 C93 114.600 94.600 111.600 95 108.200z" fill="#605e5c"/>
<circle cx="83.400" cy="126" r="3.300" fill="none" stroke="#4a7ebb" stroke-width="1.400"/><circle cx="94.600" cy="126" r="3.300" fill="none" stroke="#4a7ebb" stroke-width="1.400"/>
<path d="M80.5 144.5 h6.6 l3.4 3.4 v10.6 h-10 z" fill="#fff" stroke="#797775" stroke-width="1"/><path d="M87.1 144.5 v3.4 h3.4" fill="none" stroke="#797775" stroke-width="1"/>
<path d="M82.4 148.5 h2.6 M82.4 151.5 h6 M82.4 154.5 h6" stroke="#4a7ebb" stroke-width="1"/>
<path d="M89.5 151.5 h6.6 l3.4 3.4 v10.6 h-10 z" fill="#fff" stroke="#797775" stroke-width="1"/><path d="M96.1 151.5 v3.4 h3.4" fill="none" stroke="#797775" stroke-width="1"/>
<path d="M91.4 155.5 h2.6 M91.4 158.5 h6.2 M91.4 161.5 h6.2" stroke="#4a7ebb" stroke-width="1"/>
<path d="M112.7 154.9 l3.6 3.4 l3.6 -3.4" fill="none" stroke="#3b3a39" stroke-width="1.7" stroke-linecap="round" stroke-linejoin="round" opacity="1"/>
<path d="M78.3 190.4 L86 187.6 L93.4 195 L87.4 201 z" fill="#eac282"/>
<path d="M87 186.6 L90 183.6 L97.4 191 L94.4 194 z" fill="#797775"/>
<path d="M95.4 186.6 L99.4 182.6" stroke="#797775" stroke-width="4.4" stroke-linecap="round"/>
<path d="M124.7 232.6 V223.3 H134.3 M129 227.2 L135 233 M129.4 233.2 H135.3 V227.4" fill="none" stroke="#3b3a39" stroke-width="1.4" stroke-linecap="square"/>
<path d="M378 129.3 h7 l-3.5 4 z" fill="#605e5c"/>
<path d="M438 129.3 h7 l-3.5 4 z" fill="#605e5c"/>
<text x="460.4" y="140" font-size="23.6" fill="#605e5c" stroke="#605e5c" stroke-width="0.500" font-family="Liberation Sans, sans-serif">A</text>
<path d="M474 124 l3.6 -4 l3.6 4z" fill="#4a7ebb"/>
<text x="495" y="140" font-size="19.6" fill="#605e5c" stroke="#605e5c" stroke-width="0.500" font-family="Liberation Sans, sans-serif">A</text>
<path d="M508 120 h7.2 l-3.6 4z" fill="#4a7ebb"/>
<text transform="translate(162.400 185.400) scale(0.880 1)" font-size="21" font-weight="bold" fill="#444" font-family="Liberation Sans, sans-serif">B</text>
<text x="199.600" y="185.400" font-size="21" font-weight="bold" font-style="italic" fill="#444" font-family="Liberation Sans, sans-serif">I</text>
<text transform="translate(229.800 185.400) scale(0.920 1)" font-size="21" fill="#444" stroke="#444" stroke-width="0.500" font-family="Liberation Sans, sans-serif">U</text>
<path d="M231 187.6 h13" stroke="#444" stroke-width="1.2"/>
<path d="M260.7 178.9 l3.6 3.4 l3.6 -3.4" fill="none" stroke="#3b3a39" stroke-width="1.7" stroke-linecap="round" stroke-linejoin="round" opacity="1"/>
<g fill="none" stroke="#8a8886" stroke-width="1" stroke-dasharray="1 1"><path d="M290 168.5 h21 M290.5 168 v20 M310.500 168 v20 M300.500 168 v20 M290 178.500 h21"/></g>
<path d="M290 188.500 h21" stroke="#444" stroke-width="1.2"/>
<path d="M323.7 178.9 l3.6 3.4 l3.6 -3.4" fill="none" stroke="#3b3a39" stroke-width="1.7" stroke-linecap="round" stroke-linejoin="round" opacity="1"/>
<path d="M372.200 173.800 c2 1.400 2.600 3.600 2 6.400 c-0.400 1.800 -1.600 3.200 -2.800 4.600 c0.400 -2.600 0.400 -4.400 -0.200 -6.400 c-0.400 -1.600 -1.400 -2.800 -2.800 -3.800z" fill="#4a7ebb"/>
<path d="M364.500 169.900 L371.500 177.200 L363.300 184.900 L356.200 178.300 z" fill="#fff" stroke="#4d4c4b" stroke-width="1.100" stroke-linejoin="round"/>
<path d="M361.400 173 v-3.600 a2 2 0 0 1 2 -2 h0.400 a2 2 0 0 1 2 2 v4.400" fill="none" stroke="#4d4c4b" stroke-width="1.100"/>
<circle cx="365.500" cy="174.600" r="1.300" fill="#605e5c"/>
<rect x="352" y="185" width="24.200" height="6" fill="#ffff00"/>
<path d="M386.6 178.9 l3.6 3.4 l3.6 -3.4" fill="none" stroke="#3b3a39" stroke-width="1.7" stroke-linecap="round" stroke-linejoin="round" opacity="1"/>
<text x="411.400" y="185.600" font-size="23.400" fill="#605e5c" stroke="#605e5c" stroke-width="0.600" font-family="Liberation Sans, sans-serif">A</text>
<rect x="408" y="185" width="24.200" height="6" fill="#ff0000"/>
<path d="M442.7 178.9 l3.6 3.4 l3.6 -3.4" fill="none" stroke="#3b3a39" stroke-width="1.7" stroke-linecap="round" stroke-linejoin="round" opacity="1"/>
<text x="473" y="176.6" font-size="11.5" fill="#444" font-family="Liberation Sans, sans-serif">wén</text>
<text x="476" y="190.6" font-size="14" fill="#4a7ebb" font-family="Liberation Sans, Noto Sans CJK SC, sans-serif">文</text>
<path d="M505.7 178.9 l3.6 3.4 l3.6 -3.4" fill="none" stroke="#3b3a39" stroke-width="1.7" stroke-linecap="round" stroke-linejoin="round" opacity="1"/>
<path d="M515.7 233.2 V223.9 H525.3 M520 227.8 L526 233.6 M520.4 233.8 H526.3 V228" fill="none" stroke="#3b3a39" stroke-width="1.4" stroke-linecap="square"/>
<path d="M551 120.5 H571 M555 124.5 H567.5 M551 128.5 H571 " stroke="#605e5c" stroke-width="1.1" fill="none"/>
<path d="M585 126.5 H605 M589 130.5 H601.5 M585 134.5 H605 " stroke="#605e5c" stroke-width="1.1" fill="none"/>
<path d="M619 132.5 H639 M623 136.5 H635.5 M619 140.5 H639 " stroke="#605e5c" stroke-width="1.1" fill="none"/>
<path d="M551 168.5 H571 M551 172.5 H567 M551 176.5 H571 M551 180.5 H567 M551 184.5 H571 M551 188.5 H567 " stroke="#605e5c" stroke-width="1.1" fill="none"/>
<path d="M585 168.5 H605 M588 172.5 H602 M585 176.5 H605 M588 180.5 H602 M585 184.5 H605 M588 188.5 H602 " stroke="#605e5c" stroke-width="1.1" fill="none"/>
<path d="M619 168.5 H639 M623 172.5 H639 M619 176.5 H639 M623 180.5 H639 M619 184.5 H639 M623 188.5 H639 " stroke="#605e5c" stroke-width="1.1" fill="none"/>
<path d="M653 168.5 H675 M664 172.5 H675 M664 176.5 H675 M664 180.5 H675 M664 184.5 H675 M653 188.5 H675 " stroke="#605e5c" stroke-width="1.1" fill="none"/>
<path d="M687 168.5 H709 M698 172.5 H709 M698 176.5 H709 M698 180.5 H709 M698 184.5 H709 M687 188.5 H709 " stroke="#605e5c" stroke-width="1.1" fill="none"/>
<path d="M653.4 178.5 L658 174 h2.6 l-3.400 3.400 h5 v2.200 h-5 l3.400 3.400 h-2.600 z" fill="#4a7ebb"/>
<path d="M696.6 178.5 L692 174 h-2.600 l3.400 3.400 h-5 v2.200 h5 l-3.400 3.400 h2.600 z" fill="#4a7ebb"/>
<text transform="translate(658.6 137.6) rotate(-45)" font-size="14" fill="#605e5c" stroke="#605e5c" stroke-width="0.300" font-family="Liberation Sans, sans-serif">ab</text>
<path d="M662.4 140 L673.2 129.900" fill="none" stroke="#605e5c" stroke-width="1.300"/>
<path d="M669.8 129.200 H674 V133.400 z" fill="#605e5c" stroke="#605e5c" stroke-width="0.600"/>
<path d="M682.7 130.7 l3.6 3.4 l3.6 -3.4" fill="none" stroke="#3b3a39" stroke-width="1.7" stroke-linecap="round" stroke-linejoin="round" opacity="1"/>
<text x="734.4" y="131" font-size="13.5" fill="#605e5c" font-family="Liberation Sans, sans-serif" letter-spacing="0.3">ab</text>
<text x="734.4" y="140.4" font-size="13.5" fill="#605e5c" font-family="Liberation Sans, sans-serif">c</text>
<path d="M750.6 133.600 v2.400 a1 1 0 0 1 -1 1 h-4.600 M747.200 134.600 l-2.400 2.400 l2.400 2.400" fill="none" stroke="#4a7ebb" stroke-width="1.2"/>
<rect x="731.5" y="167.5" width="22.500" height="22" fill="#fff" stroke="#797775" stroke-width="1"/>
<path d="M731.500 172.500 h22.500 M731.500 184.500 h22.500 M742.500 167.500 v5 M742.500 184.500 v5" stroke="#797775" stroke-width="1" fill="none"/>
<path d="M734 178.500 h17.500 M736.600 176 l-2.600 2.500 l2.600 2.500 M748.900 176 l2.600 2.500 l-2.600 2.500" stroke="#4a7ebb" stroke-width="1.1" fill="none"/>
<path d="M765.9 178.9 l3.6 3.4 l3.6 -3.4" fill="none" stroke="#3b3a39" stroke-width="1.7" stroke-linecap="round" stroke-linejoin="round" opacity="1"/>
<path d="M777.7 233.2 V223.9 H787.3 M782 227.8 L788 233.6 M782.4 233.8 H788.3 V228" fill="none" stroke="#3b3a39" stroke-width="1.4" stroke-linecap="square"/>
<path d="M988.6 129.3 h7 l-3.5 4 z" fill="#605e5c"/>
<path d="M811 168 h23 v10 h-4 v3.400 h-19 z" fill="#4a7ebb"/>
<path d="M813.600 170.600 h17.800 v1.200 a2.400 2.400 0 0 0 0 4.600 v2.600 h-17.800 v-1.600 a2.400 2.400 0 0 0 0 -4.400 z" fill="#fff"/>
<circle cx="822.500" cy="174.800" r="2.700" fill="#4a7ebb"/>
<ellipse cx="829.5" cy="183.8" rx="4.300" ry="1.500" fill="#f3e0bb" stroke="#dfb56c" stroke-width="0.900"/><ellipse cx="829.5" cy="181.6" rx="4.300" ry="1.500" fill="#f3e0bb" stroke="#dfb56c" stroke-width="0.900"/><ellipse cx="829.5" cy="179.4" rx="4.300" ry="1.500" fill="#f3e0bb" stroke="#dfb56c" stroke-width="0.900"/><ellipse cx="829.5" cy="177.2" rx="4.300" ry="1.500" fill="#f3e0bb" stroke="#dfb56c" stroke-width="0.900"/>
<ellipse cx="823.5" cy="189" rx="4.300" ry="1.500" fill="#f3e0bb" stroke="#dfb56c" stroke-width="0.900"/><ellipse cx="823.5" cy="186.8" rx="4.300" ry="1.500" fill="#f3e0bb" stroke="#dfb56c" stroke-width="0.900"/><ellipse cx="823.5" cy="184.6" rx="4.300" ry="1.500" fill="#f3e0bb" stroke="#dfb56c" stroke-width="0.900"/>
<path d="M845.7 178.9 l3.6 3.4 l3.6 -3.4" fill="none" stroke="#3b3a39" stroke-width="1.7" stroke-linecap="round" stroke-linejoin="round" opacity="1"/>
<text x="867.400" y="188" font-size="24.500" fill="#605e5c" font-family="Liberation Sans, sans-serif">%</text>
<text x="908" y="177.600" font-size="39" font-weight="bold" fill="#605e5c" font-family="Liberation Serif, serif">,</text>
<path d="M943 172.8 l4.200 -4 h2.400 l-3 3 h5.400 v2 h-5.400 l3 3 h-2.400 z" fill="#4a7ebb"/>
<text x="953" y="177.400" font-size="13" fill="#605e5c" font-family="Liberation Sans, sans-serif">.0</text>
<text x="945.400" y="189.400" font-size="13" fill="#605e5c" font-family="Liberation Sans, sans-serif">.00</text>
<text x="979.400" y="177.400" font-size="13" fill="#605e5c" font-family="Liberation Sans, sans-serif">.00</text>
<path d="M986.2 184.8 l-4.200 -4 h-2.400 l3 3 h-5.400 v2 h5.400 l-3 3 h2.400 z" fill="#4a7ebb"/>
<text x="987.400" y="189.400" font-size="13" fill="#605e5c" font-family="Liberation Sans, sans-serif">.0</text>
<path d="M998.7 233.2 V223.9 H1008.3 M1003 227.8 L1009 233.6 M1003.4 233.8 H1009.3 V228" fill="none" stroke="#3b3a39" stroke-width="1.4" stroke-linecap="square"/>
<rect x="1047.500" y="107.500" width="39.500" height="32.500" fill="#fff" stroke="#797775" stroke-width="1"/>
<rect x="1059.500" y="108" width="8" height="7.500" fill="#d9603b"/><rect x="1059.500" y="116" width="13.500" height="7.500" fill="#4a7ebb"/><rect x="1059.500" y="124" width="10.500" height="7.500" fill="#d9603b"/><rect x="1059.500" y="132" width="5.200" height="7.500" fill="#4a7ebb"/>
<path d="M1059.500 107.500 v32.500 M1074.500 107.500 v32.500 M1047.500 115.600 h39.500 M1047.500 123.700 h39.500 M1047.500 131.800 h39.500" stroke="#c8c6c4" stroke-width="1" fill="none"/>
<rect x="1047.500" y="107.500" width="39.500" height="32.500" fill="none" stroke="#797775" stroke-width="1"/>
<rect x="1069" y="133" width="23" height="19" fill="#f3f2f1"/>
<rect x="1070.500" y="134.500" width="20.500" height="16" fill="#fff" stroke="#797775" stroke-width="1"/>
<text x="1075" y="149" font-size="18" fill="#3b3a39" font-family="Liberation Sans, DejaVu Sans, sans-serif">≠</text>
<path d="M1065.7 188 l3.6 3.4 l3.6 -3.4" fill="none" stroke="#3b3a39" stroke-width="1.7" stroke-linecap="round" stroke-linejoin="round" opacity="1"/>
<rect x="1135.500" y="110.500" width="40" height="32.500" fill="#fff" stroke="#797775" stroke-width="1"/>
<rect x="1145.500" y="118.600" width="30" height="24.400" fill="#bdd3ea"/>
<path d="M1145.500 110.500 v32.500 M1155.500 110.500 v32.500 M1165.500 110.500 v32.500 M1135.500 118.600 h40 M1135.500 126.700 h40 M1135.500 134.800 h40" stroke="#adadad" stroke-width="1" fill="none"/>
<rect x="1135.500" y="110.500" width="40" height="32.500" fill="none" stroke="#797775" stroke-width="1"/>
<polygon points="1177.2,119.2 1177.2,145.7 1150.7,145.7" fill="#f3f2f1"/><polygon points="1178.9,119.7 1178.9,130.7 1172.4,135.8 1168.1,131.5" fill="#808080" stroke="#f3f2f1" stroke-width="2" paint-order="stroke" stroke-linejoin="round"/><polygon points="1167.6,132.6 1171.4,136.9 1167.3,141 1163.3,137.2" fill="#808080" stroke="#f3f2f1" stroke-width="2" paint-order="stroke" stroke-linejoin="round"/><path d="M1155.2 143.1 C1157.4 140.7 1158.4 139.3 1160.6 139.1 C1163.9 138.9 1166.3 141.3 1166 144.2 C1165.5 148.2 1161.9 151.7 1157.3 151.8 H1146 Z" fill="#4a81bd" stroke="#f3f2f1" stroke-width="2" paint-order="stroke" stroke-linejoin="round"/><path d="M1156.3 143.6 C1157.7 141.7 1159.1 140.2 1160.7 140.1 C1163.4 140 1165.2 142 1164.9 144.3 C1164.6 146.1 1163.7 147.5 1162.1 148.6 C1161.9 145.7 1159.9 143.5 1156.3 143.6 Z" fill="#fff"/>
<path d="M1189 188 l3.6 3.4 l3.6 -3.4" fill="none" stroke="#3b3a39" stroke-width="1.7" stroke-linecap="round" stroke-linejoin="round" opacity="1"/>
<rect x="1230.500" y="107.500" width="40.500" height="32.500" fill="#fff" stroke="#797775" stroke-width="1"/>
<path d="M1237.500 107.500 v32.500 M1263.500 107.500 v32.500 M1230.500 114.600 h40.500 M1230.500 132.600 h40.500" stroke="#adadad" stroke-width="1" fill="none"/>
<rect x="1238" y="115.100" width="25" height="17" fill="#bdd3ea"/>
<rect x="1230.500" y="107.500" width="40.500" height="32.500" fill="none" stroke="#797775" stroke-width="1"/>
<polygon points="1272.5,116.2 1272.5,142.7 1246,142.7" fill="#f3f2f1"/><polygon points="1274.2,116.7 1274.2,127.7 1267.7,132.8 1263.4,128.5" fill="#808080" stroke="#f3f2f1" stroke-width="2" paint-order="stroke" stroke-linejoin="round"/><polygon points="1262.9,129.6 1266.7,133.9 1262.6,138 1258.6,134.2" fill="#808080" stroke="#f3f2f1" stroke-width="2" paint-order="stroke" stroke-linejoin="round"/><path d="M1250.5 140.1 C1252.7 137.7 1253.7 136.3 1255.9 136.1 C1259.2 135.9 1261.6 138.3 1261.3 141.2 C1260.8 145.2 1257.2 148.7 1252.6 148.8 H1241.3 Z" fill="#4a81bd" stroke="#f3f2f1" stroke-width="2" paint-order="stroke" stroke-linejoin="round"/><path d="M1251.6 140.6 C1253 138.7 1254.4 137.2 1256 137.1 C1258.7 137 1260.5 139 1260.2 141.3 C1259.9 143.1 1259 144.5 1257.4 145.6 C1257.2 142.7 1255.2 140.5 1251.6 140.6 Z" fill="#fff"/>
<path d="M1250 188 l3.6 3.4 l3.6 -3.4" fill="none" stroke="#3b3a39" stroke-width="1.7" stroke-linecap="round" stroke-linejoin="round" opacity="1"/>
<g fill="#fff" stroke="#797775" stroke-width="1"><rect x="1329.500" y="105.500" width="12" height="4"/><rect x="1329.500" y="118.500" width="12" height="8"/><path d="M1329.500 122.500 h12 M1335.500 105.500 v4 M1335.500 118.500 v8" fill="none"/></g>
<rect x="1339.500" y="112.500" width="11" height="3.500" fill="#bdd3ea" stroke="#8fb0d6" stroke-width="1"/><path d="M1345 112.500 v3.500" stroke="#8fb0d6" stroke-width="1"/>
<path d="M1329.200 114.200 l3.400 -3.200 h1.900 l-2.400 2.400 h4.900 v1.600 h-4.900 l2.400 2.400 h-1.900 z" fill="#4a7ebb"/>
<g fill="#fff" stroke="#797775" stroke-width="1"><rect x="1329.500" y="139.500" width="12" height="4"/><rect x="1329.500" y="152.500" width="12" height="8"/><path d="M1329.500 156.500 h12 M1335.500 139.500 v4 M1335.500 152.500 v8" fill="none"/></g>
<rect x="1334.500" y="146" width="6.500" height="4" fill="#bdd3ea" stroke="#adadad" stroke-width="1"/>
<path d="M1341.400 143.600 l9.600 9.200 M1351 143.600 l-9.600 9.200" stroke="#d9603b" stroke-width="1.700" fill="none" stroke-linecap="round"/>
<path d="M1329.500 172.500 v5 M1347.500 172.500 v5 M1331 175 h15 M1333 173 l-2.200 2 l2.200 2 M1344 173 l2.200 2 l-2.200 2" stroke="#4a7ebb" stroke-width="1" fill="none"/>
<rect x="1329.500" y="178.500" width="21.500" height="14.500" fill="#fff" stroke="#797775" stroke-width="1"/>
<path d="M1334.500 178.500 v14.500 M1342.500 178.500 v14.500 M1346.800 178.500 v14.500 M1329.500 182.500 h21.500 M1329.500 189.500 h21.500" stroke="#c8c6c4" stroke-width="1" fill="none"/>
<rect x="1335.500" y="183" width="6.500" height="6.500" fill="#4a7ebb"/>
<path d="M1329.500 193 v2.500 h7 l1.200 -1.200 h4.600 l1.200 -1.300" stroke="#797775" stroke-width="1" fill="none"/>
<rect x="1329.500" y="178.500" width="21.500" height="14.500" fill="none" stroke="#797775" stroke-width="1"/>
<path d="M1407.8 116.1 l3.6 3.4 l3.6 -3.4" fill="none" stroke="#3b3a39" stroke-width="1.7" stroke-linecap="round" stroke-linejoin="round" opacity="1"/>
<path d="M1407.8 149.9 l3.6 3.4 l3.6 -3.4" fill="none" stroke="#3b3a39" stroke-width="1.7" stroke-linecap="round" stroke-linejoin="round" opacity="1"/>
<path d="M1398.6 182.9 l3.6 3.4 l3.6 -3.4" fill="none" stroke="#3b3a39" stroke-width="1.7" stroke-linecap="round" stroke-linejoin="round" opacity="1"/>
<text transform="translate(1455.200 124.800) scale(1.100 1)" font-size="26" fill="#444" stroke="#444" stroke-width="0.700" font-family="Liberation Sans, sans-serif">Σ</text>
<path d="M1487.4 116.1 l3.6 3.4 l3.6 -3.4" fill="none" stroke="#3b3a39" stroke-width="1.7" stroke-linecap="round" stroke-linejoin="round" opacity="1"/>
<rect x="1454.800" y="139" width="20" height="21.500" fill="#fff" stroke="#8a8886" stroke-width="1"/>
<rect x="1454.300" y="138.500" width="21" height="3.500" fill="#797775"/>
<path d="M1464.800 145 v11.400 M1459.600 151.800 l5.200 5.100 l5.200 -5.100" stroke="#4a7ebb" stroke-width="2.500" fill="none"/>
<path d="M1483.6 149.9 l3.6 3.4 l3.6 -3.4" fill="none" stroke="#3b3a39" stroke-width="1.7" stroke-linecap="round" stroke-linejoin="round" opacity="1"/>
<g transform="translate(1465.200 184) rotate(-42)"><rect x="-10.500" y="-5.500" width="21" height="11" rx="2" fill="#e8859a"/><path d="M-5.500 -5.500 v11" stroke="#f3f2f1" stroke-width="1.200"/></g>
<path d="M1483.6 183.7 l3.6 3.4 l3.6 -3.4" fill="none" stroke="#3b3a39" stroke-width="1.7" stroke-linecap="round" stroke-linejoin="round" opacity="1"/>
<text x="1532" y="123.300" font-size="22.400" fill="#4a7ebb" stroke="#4a7ebb" stroke-width="0.400" font-family="Liberation Sans, sans-serif">A</text>
<text x="1532.800" y="144.200" font-size="22" fill="#a364c8" stroke="#a364c8" stroke-width="0.400" font-family="Liberation Sans, sans-serif">Z</text>
<path d="M1551.200 117.200 h23 l-9.500 9.800 v11.600 h-4.600 v-11.600 z" fill="#797775"/>
<path d="M1562.400 129 v7.800" stroke="#f3f2f1" stroke-width="1.200"/>
<path d="M1551.8 188 l3.6 3.4 l3.6 -3.4" fill="none" stroke="#3b3a39" stroke-width="1.7" stroke-linecap="round" stroke-linejoin="round" opacity="1"/>
<circle cx="1655" cy="123" r="13.300" fill="#fff" stroke="#4a7ebb" stroke-width="2.800"/>
<path d="M1645.400 133 L1632.800 145.600" stroke="#4a7ebb" stroke-width="4.800" stroke-linecap="round"/>
<path d="M1648.8 188 l3.6 3.4 l3.6 -3.4" fill="none" stroke="#3b3a39" stroke-width="1.7" stroke-linecap="round" stroke-linejoin="round" opacity="1"/>
<defs><linearGradient id="bd" gradientUnits="userSpaceOnUse" x1="1742" y1="120" x2="1782" y2="135"><stop offset="0" stop-color="#45d6ff"/><stop offset="1" stop-color="#0aa2fc"/></linearGradient><linearGradient id="bdr" gradientUnits="userSpaceOnUse" x1="1752" y1="120" x2="1772" y2="128"><stop offset="0" stop-color="#ff7f8b"/><stop offset="1" stop-color="#f7456c"/></linearGradient></defs>
<g fill="none" stroke-width="5.200" stroke="url(#bd)"><circle cx="1752.100" cy="132.100" r="7.100"/><path d="M1756.600 138.200 L1768.400 126.600"/><path d="M1767.400 127.400 A7.100 7.100 0 1 1 1767.300 136.600" stroke-linecap="round"/><path d="M1754.900 121.100 a7.500 7.500 0 0 1 15 0" stroke-width="5"/><path d="M1754.900 119.400 v1.700 a7.500 7.500 0 0 0 15 0 v-1.700" stroke="url(#bdr)" stroke-width="5"/></g>
<path d="M1893.400 235 l7 -7 l7 7" fill="none" stroke="#3b3a39" stroke-width="1.600"/>
<path d="M158 273.2 h7.400 l-3.700 4.200z" fill="#777"/>
<g fill="#bcbcbc"><rect x="196" y="267" width="3" height="3"/><rect x="196" y="273" width="3" height="3"/><rect x="196" y="279" width="3" height="3"/></g>
<path d="M241 268 C246 272 252 278 256.600 282.400 M256.400 268.400 C251 272.400 245.600 277.400 240.800 282.400" fill="none" stroke="#c3c3c3" stroke-width="2.500" stroke-linecap="round"/>
<path d="M296 276.800 l4.800 5.400 c3 -6 7 -10.600 11 -13.600" fill="none" stroke="#cbcbcb" stroke-width="3.200" stroke-linecap="round" stroke-linejoin="round"/>
<text x="348.600" y="281.400" font-size="25" font-style="italic" font-weight="bold" fill="#7a7a7a" font-family="Liberation Serif, serif" letter-spacing="-2.200">fx</text>
<path d="M1894.400 273.400 l5 5 l5 -5" fill="none" stroke="#6a6a6a" stroke-width="2.600"/>
<path d="M35.800 313.200 V331 H18 z" fill="#b4b4b4"/>
<path d="M1899 325 h11.400 l-5.700 -6.200z" fill="#777"/>
<path d="M1899 941 h11.400 l-5.700 6.200z" fill="#777"/>
<path d="M35.600 964.600 v12 l-6.600 -6z" fill="#c6c6c6"/><path d="M62.800 964.600 v12 l6.600 -6z" fill="#c6c6c6"/>
<path d="M115.500 958 v25 M187.500 958 v25 M463.500 958 v25" stroke="#a0a0a0" stroke-width="1"/>
<circle cx="512.700" cy="970.700" r="10.300" fill="none" stroke="#777" stroke-width="1.200"/><path d="M507.200 970.700 h11 M512.700 965.200 v11" stroke="#6a6a6a" stroke-width="1.700"/>
<g fill="#bcbcbc"><rect x="1147" y="963" width="3" height="3"/><rect x="1147" y="969" width="3" height="3"/><rect x="1147" y="975" width="3" height="3"/></g>
<path d="M1182.400 964.800 v11.600 l-6.400 -5.800z" fill="#777"/><path d="M1876 964.800 v11.600 l6.400 -5.800z" fill="#777"/>
<g fill="none" stroke="#444" stroke-width="1.500"><path d="M83 1012.600 H75.400 V995.800 H95 V1001.600"/><path d="M75.400 998.800 H95 M78.400 1002.400 h3.800 M78.400 1005.400 h3 M78.400 1008.400 h2.600" stroke-width="1.300"/><circle cx="88.600" cy="1007.700" r="5.700" fill="#f3f2f1"/></g><circle cx="88.600" cy="1007.700" r="2.700" fill="#444"/>
<g fill="none" stroke="#444" stroke-width="1.300"><path d="M1331.500 1009.200 H1324 V996.400 H1344.600 V1000.500"/></g>
<g transform="translate(1338.600 1007.400)"><g stroke="#444" stroke-width="2.400"><path d="M0 -6.200 V6.200 M-6.200 0 H6.200 M-4.400 -4.400 L4.400 4.400 M-4.400 4.400 L4.400 -4.400"/></g><circle r="4.300" fill="#444"/><circle r="2.100" fill="#f3f2f1"/></g>
<g fill="none" stroke="#444" stroke-width="1.300"><rect x="1486.200" y="994.600" width="17.600" height="16.800"/><path d="M1492 994.600 v16.800 M1498 994.600 v16.800 M1486.200 1000.200 h17.600 M1486.200 1005.800 h17.600"/></g>
<g fill="none" stroke="#444" stroke-width="1.300"><rect x="1546.200" y="994.600" width="19" height="16.800"/><rect x="1550.400" y="998" width="10.600" height="10.200"/><path d="M1553 1001 h5.400 M1553 1003.200 h5.400 M1553 1005.400 h5.400"/></g>
<g fill="none" stroke="#444" stroke-width="1.300"><rect x="1606.200" y="994.600" width="19.800" height="16.800"/><path d="M1611.200 994.600 v8.600 h9.600 v-8.600 M1606.200 1003.200 h19.800"/></g>
<path d="M1655 1004 h10" stroke="#444" stroke-width="1.200"/>
<path d="M1674 1004 h148" stroke="#444" stroke-width="1.800"/>
<path d="M1747.500 1000 v8" stroke="#444" stroke-width="1.300"/>
<rect x="1737.400" y="995" width="7.400" height="17" rx="0.500" fill="#6e6e6e"/>
<path d="M1830 1004 h11.400 M1835.700 998.300 v11.400" stroke="#444" stroke-width="1.200"/>
<rect x="279.500" y="332.500" width="167" height="31" rx="3" fill="none" stroke="#ff1e10" stroke-width="5"/>
<rect x="1682.500" y="338.500" width="118" height="28" rx="3" fill="none" stroke="#ff1e10" stroke-width="5"/>
<polygon points="274,269.800 326.500,306.500 327.600,301 335.700,320.500 314.800,316 320.300,315" fill="#ff1e10"/>
<polygon points="1665.800,271.800 1705.300,320.300 1707,313.200 1710,333.400 1690.600,323.200 1697,325.600" fill="#ff1e10"/>
</svg>
</body></html>
